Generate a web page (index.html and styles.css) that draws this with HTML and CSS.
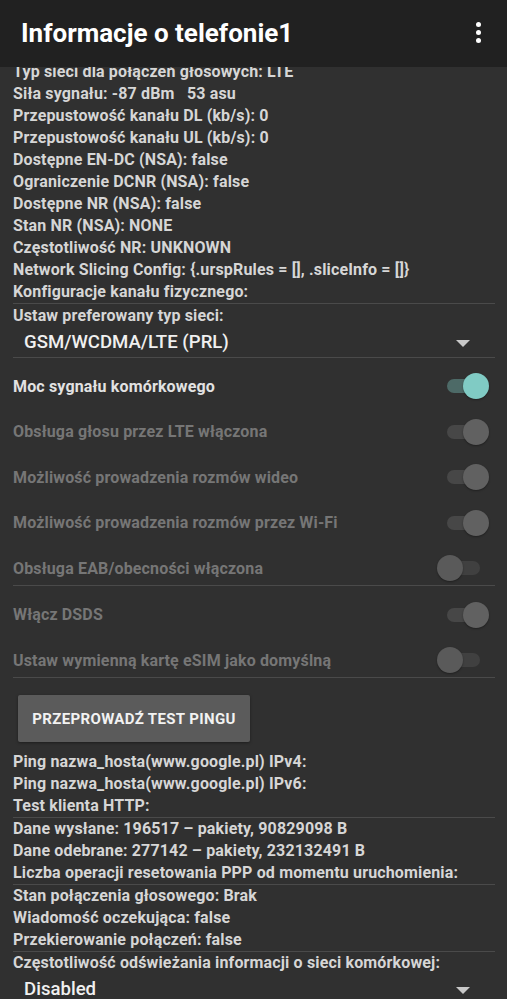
FILE: index.html
```html
<!DOCTYPE html>
<html lang="pl">
<head>
    <meta charset="UTF-8">
    <meta name="viewport" content="width=device-width, initial-scale=1.0">
    <title>Informacje o telefonie1</title>
    <link rel="stylesheet" href="styles.css">
</head>
<body>
    <header class="appbar">
        <h1 class="appbar-title">Informacje o telefonie1</h1>
        <div class="menu">
            <span></span><span></span><span></span>
        </div>
    </header>

    <main class="content">
        <div class="group">
            <p>Typ sieci dla połączeń głosowych: LTE</p>
            <p>Siła sygnału: -87 dBm&nbsp;&nbsp; 53 asu</p>
            <p>Przepustowość kanału DL (kb/s): 0</p>
            <p>Przepustowość kanału UL (kb/s): 0</p>
            <p>Dostępne EN-DC (NSA): false</p>
            <p>Ograniczenie DCNR (NSA): false</p>
            <p>Dostępne NR (NSA): false</p>
            <p>Stan NR (NSA): NONE</p>
            <p>Częstotliwość NR: UNKNOWN</p>
            <p>Network Slicing Config: {.urspRules = [], .sliceInfo = []}</p>
            <p>Konfiguracje kanału fizycznego:</p>
        </div>
        <div class="group">
            <p class="gap-top">Ustaw preferowany typ sieci:</p>
            <div class="spinner">
                <span class="spinner-value">GSM/WCDMA/LTE (PRL)</span>
                <span class="arrow"></span>
            </div>
        </div>

        <div class="switches">
            <div class="switch-row">
                <span class="label">Moc sygnału komórkowego</span>
                <span class="switch on"><span class="track"></span><span class="thumb"></span></span>
            </div>
            <div class="switch-row disabled">
                <span class="label">Obsługa głosu przez LTE włączona</span>
                <span class="switch on"><span class="track"></span><span class="thumb"></span></span>
            </div>
            <div class="switch-row disabled">
                <span class="label">Możliwość prowadzenia rozmów wideo</span>
                <span class="switch on"><span class="track"></span><span class="thumb"></span></span>
            </div>
            <div class="switch-row disabled">
                <span class="label">Możliwość prowadzenia rozmów przez Wi-Fi</span>
                <span class="switch on"><span class="track"></span><span class="thumb"></span></span>
            </div>
            <div class="switch-row disabled divided">
                <span class="label">Obsługa EAB/obecności włączona</span>
                <span class="switch"><span class="track"></span><span class="thumb"></span></span>
            </div>
            <div class="switch-row disabled">
                <span class="label">Włącz DSDS</span>
                <span class="switch on"><span class="track"></span><span class="thumb"></span></span>
            </div>
            <div class="switch-row disabled divided">
                <span class="label">Ustaw wymienną kartę eSIM jako domyślną</span>
                <span class="switch"><span class="track"></span><span class="thumb"></span></span>
            </div>
        </div>

        <button class="ping-btn">PRZEPROWADŹ TEST PINGU</button>

        <div class="group">
            <p>Ping nazwa_hosta(www.google.pl) IPv4:</p>
            <p>Ping nazwa_hosta(www.google.pl) IPv6:</p>
            <p>Test klienta HTTP:</p>
        </div>
        <div class="group">
            <p>Dane wysłane: 196517 – pakiety, 90829098 B</p>
            <p>Dane odebrane: 277142 – pakiety, 232132491 B</p>
            <p>Liczba operacji resetowania PPP od momentu uruchomienia:</p>
        </div>
        <div class="group">
            <p>Stan połączenia głosowego: Brak</p>
            <p>Wiadomość oczekująca: false</p>
            <p>Przekierowanie połączeń: false</p>
        </div>
        <div class="group">
            <p>Częstotliwość odświeżania informacji o sieci komórkowej:</p>
            <div class="spinner">
                <span class="spinner-value">Disabled</span>
                <span class="arrow"></span>
            </div>
        </div>
    </main>
</body>
</html>
```

FILE: styles.css
```css
html, body {
    margin: 0;
    overflow: hidden;
}
body {
    background-color: #303030;
    font-family: Roboto, "Noto Sans", sans-serif;
    color: #d6d6d6;
}

/* pasek tytułu */
.appbar {
    position: fixed;
    top: 0;
    left: 0;
    right: 0;
    height: 67px;
    background-color: #212121;
    display: flex;
    align-items: center;
    justify-content: space-between;
    padding: 0 21px;
    box-sizing: border-box;
    z-index: 2;
}
.appbar-title {
    margin: 0;
    font-size: 26px;
    font-weight: 700;
    color: #fff;
    margin-top: -2px;
}
.menu {
    display: flex;
    flex-direction: column;
    gap: 3px;
    margin-right: 5px;
    margin-top: -2px;
}
.menu span {
    width: 5px;
    height: 5px;
    border-radius: 50%;
    background-color: #fff;
}

.content {
    padding: 61px 12px 0 13px;
}

.group {
    border-bottom: 1px solid #4a4a4a;
}
.group p {
    margin: 0;
    font-size: 16px;
    line-height: 22px;
    font-weight: 700;
    letter-spacing: 0.15px;
    white-space: nowrap;
}
.group p.gap-top {
    margin-top: 1px;
}

.spinner {
    display: flex;
    align-items: center;
    justify-content: space-between;
    height: 30px;
    padding: 0 25px 0 11px;
}
.spinner-value {
    font-size: 18.6px;
    line-height: 30px;
    font-weight: 500;
    color: #f0f0f0;
}
.arrow {
    width: 0;
    height: 0;
    border-left: 7px solid transparent;
    border-right: 7px solid transparent;
    border-top: 7px solid #c8c8c8;
    margin-top: 3px;
}

/* przełączniki */
.switches {
    display: flex;
    flex-direction: column;
    gap: 11.5px;
    margin-top: 11px;
}
.switch-row {
    display: flex;
    align-items: center;
    justify-content: space-between;
    height: 34px;
}
.switch-row.divided {
    border-bottom: 1px solid #4a4a4a;
}
.label {
    font-size: 16px;
    font-weight: 700;
    letter-spacing: 0.15px;
    color: #e2e2e2;
}
.switch-row.disabled .label {
    color: #767676;
}
.switch {
    position: relative;
    width: 52px;
    height: 26px;
    margin-right: 6px;
}
.track {
    position: absolute;
    left: 10px;
    top: 6px;
    width: 33px;
    height: 14px;
    border-radius: 7px;
    background-color: #404040;
}
.thumb {
    position: absolute;
    left: 0;
    top: 0;
    width: 26px;
    height: 26px;
    border-radius: 50%;
    background-color: #5a5a5a;
    box-shadow: 0 1px 2px rgba(0, 0, 0, 0.35);
}
.switch.on .thumb {
    left: 26px;
}
.switch.on .track {
    background-color: #474747;
}
.switch.on .thumb {
    background-color: #616161;
}
.switch-row:not(.disabled) .switch.on .track {
    background-color: #4d6a67;
}
.switch-row:not(.disabled) .switch.on .thumb {
    background-color: #80cbc4;
}

.ping-btn {
    display: block;
    margin: 17px 0 9px 5px;
    width: 232px;
    height: 47px;
    border: none;
    border-radius: 2px;
    background-color: #5b5b5b;
    box-shadow: 0 1px 3px rgba(0, 0, 0, 0.4);
    color: #f2f2f2;
    font-family: Roboto, "Noto Sans", sans-serif;
    font-size: 15px;
    font-weight: 700;
    letter-spacing: 0.35px;
    padding: 0;
}
```
